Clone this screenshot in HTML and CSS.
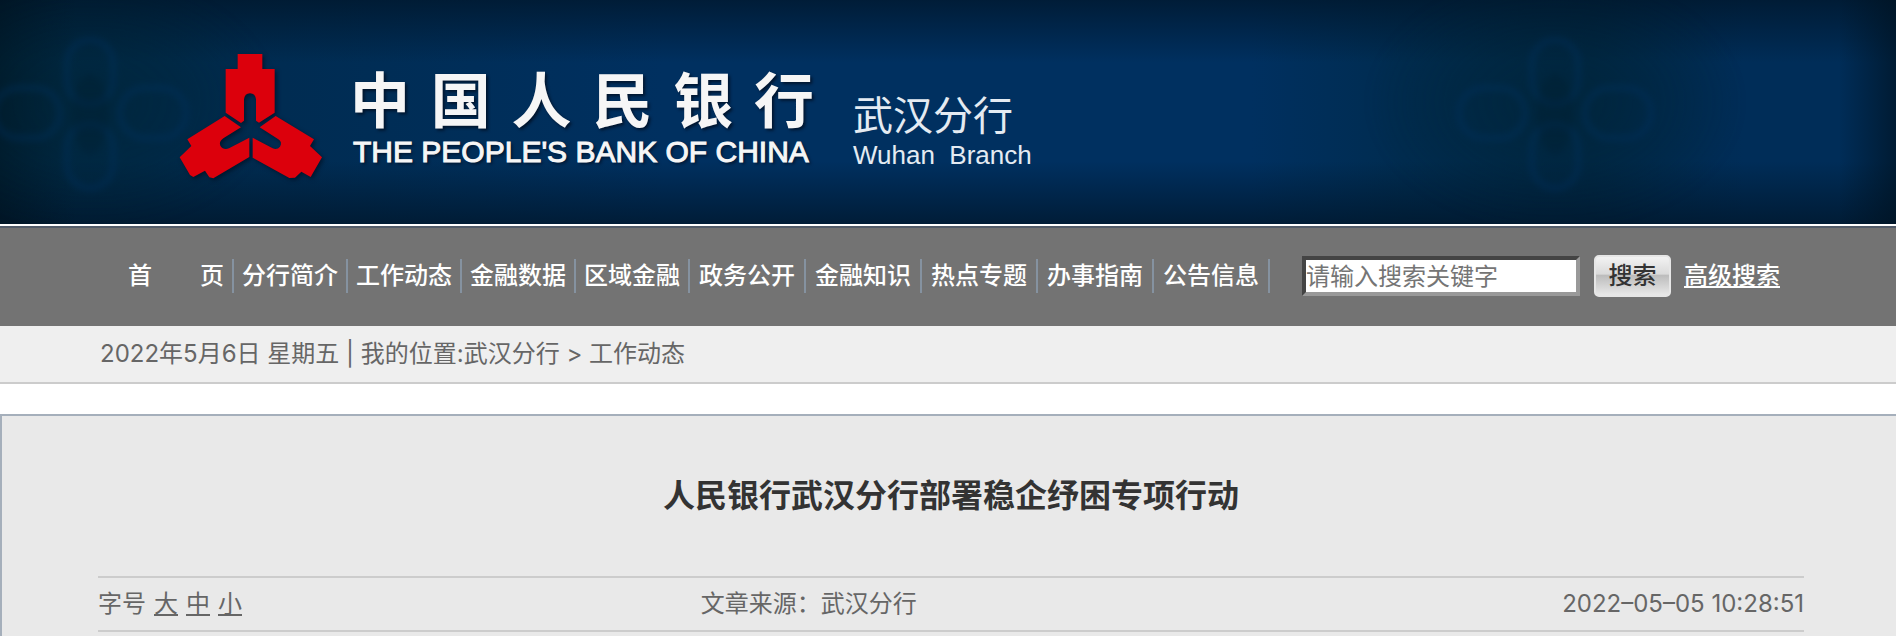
FILE: index.html
```html
<!DOCTYPE html>
<html lang="zh-CN">
<head>
<meta charset="utf-8">
<title>人民银行武汉分行部署稳企纾困专项行动</title>
<link rel="stylesheet" href="styles.css">
</head>
<body>
<header class="banner">
  <svg class="coin coin-left" viewBox="0 0 260 200" aria-hidden="true">
    <defs>
      <radialGradient id="shade">
        <stop offset="0" stop-color="#00222e" stop-opacity=".5"/>
        <stop offset=".5" stop-color="#00222e" stop-opacity=".3"/>
        <stop offset="1" stop-color="#00222e" stop-opacity="0"/>
      </radialGradient>
    </defs>
    <g id="coin-pattern">
      <ellipse cx="130" cy="100" rx="190" ry="130" fill="url(#shade)"/>
      <rect x="107" y="38" width="46" height="64" rx="23" class="coin-ring"/>
      <rect x="107" y="122" width="46" height="64" rx="23" class="coin-ring"/>
      <rect x="34" y="86" width="66" height="50" rx="25" class="coin-ring"/>
      <rect x="160" y="86" width="66" height="50" rx="25" class="coin-ring"/>
      <ellipse cx="130" cy="112" rx="18" ry="40" class="coin-core"/>
    </g>
  </svg>
  <svg class="coin coin-right" viewBox="0 0 260 200" aria-hidden="true"><use href="#coin-pattern"/></svg>
  <div class="brand">
    <svg class="emblem" viewBox="54 36 438 384" role="img" aria-label="中国人民银行行徽">
      <path d="M233 42H307V87H344V218L297 248L288 242V178Q286 160 270 160Q254 160 252 178V242L243 249L197 218V87H233Z"/>
      <path d="M347 228L462 298L450 318L486 352L452 411L424 395L405 413L388 414L278 353V293L338 325Q352 330 360 320Q368 307 355 298L299 262Z"/>
      <path d="M194 228L82 298L94 318L59 352L90 405L100 411L135 392L148 412L160 415L268 351V293L207 325Q190 331 181 317Q176 305 190 295L243 262Z"/>
    </svg>
    <div class="bank">
      <div class="bank-cn"><span>中</span><span>国</span><span>人</span><span>民</span><span>银</span><span>行</span></div>
      <div class="bank-en">THE PEOPLE'S BANK OF CHINA</div>
    </div>
    <div class="branch">
      <div class="branch-cn">武汉分行</div>
      <div class="branch-en">Wuhan  Branch</div>
    </div>
  </div>
</header>

<nav class="nav">
  <ul class="menu">
    <li class="home"><a href="#"><span>首</span><span>页</span></a></li>
    <li><a href="#">分行简介</a></li>
    <li><a href="#">工作动态</a></li>
    <li><a href="#">金融数据</a></li>
    <li><a href="#">区域金融</a></li>
    <li class="wide"><a href="#">政务公开</a></li>
    <li class="wide"><a href="#">金融知识</a></li>
    <li class="wide"><a href="#">热点专题</a></li>
    <li class="wide"><a href="#">办事指南</a></li>
    <li class="wide"><a href="#">公告信息</a></li>
  </ul>
  <form class="search">
    <input type="text" aria-label="搜索关键字" placeholder="请输入搜索关键字">
    <button type="button">搜索</button>
    <a href="#">高级搜索</a>
  </form>
</nav>

<div class="crumbs">2022年5月6日 星期五 | 我的位置:武汉分行 &gt; 工作动态</div>

<main class="article">
  <h1>人民银行武汉分行部署稳企纾困专项行动</h1>
  <div class="meta">
    <div class="sizes"><span>字号</span><a href="#">大</a><a href="#">中</a><a href="#">小</a></div>
    <div class="source">文章来源：武汉分行</div>
    <time class="date">2022–05–05 10:28:51</time>
  </div>
</main>
</body>
</html>
```
FILE: styles.css
```css
* { box-sizing: border-box; }

body {
  margin: 0;
  background: #fff;
  color: #666;
  font: 24px/32px Inter, "Noto Sans CJK SC", sans-serif;
}

.banner {
  position: relative;
  padding: 52px 0 44px 178px;
  overflow: hidden;
  background:
    linear-gradient(to right, rgba(0, 18, 30, .6), transparent 4%, transparent 97%, rgba(0, 18, 32, .65)),
    linear-gradient(to bottom, rgba(0, 22, 42, .75), transparent 28%, transparent 72%, rgba(0, 22, 42, .75)),
    linear-gradient(to right, #002a48 0%, #002c52 15%, #003060 35%, #003060 66%, #002c50 74%, #00294a 84%, #002d58 92%, #002d58 100%);
}

.coin {
  position: absolute;
  top: 2px;
  width: 260px;
  height: 200px;
  overflow: visible;
  filter: blur(3px);
}
.coin-left { left: -40px; }
.coin-right { right: 211px; }
.coin-ring { fill: none; stroke: #003468; stroke-width: 7; opacity: .3; }
.coin-core { fill: #001e30; opacity: .3; }

.brand {
  position: relative;
  display: flex;
  align-items: flex-start;
}

.emblem {
  width: 146px;
  height: 128px;
  fill: #dc000c;
  filter: drop-shadow(2px 2px 2px rgba(0, 10, 25, .6));
}

.bank {
  width: 464px;
  margin-left: 26px;
  padding-top: 16px;
  color: #f6f6f6;
  text-shadow: 2px 2px 3px rgba(0, 10, 25, .7);
}
.bank-cn {
  display: flex;
  justify-content: space-between;
  font-size: 60px;
  line-height: 66px;
  font-weight: 700;
}
.bank-en {
  padding-left: 3px;
  font: 30px/36px "Liberation Sans", Arial, sans-serif;
  -webkit-text-stroke: 1px #f6f6f6;
  white-space: nowrap;
}

.branch {
  margin-left: 39px;
  padding-top: 40px;
  color: #e4ebf2;
}
.branch-cn { font-size: 40px; line-height: 48px; }
.branch-en {
  font: 26px/30px "Liberation Sans", Arial, sans-serif;
  white-space: pre;
}

.nav {
  display: flex;
  align-items: center;
  height: 102px;
  border-top: 2px solid #fff;
  padding-left: 120px;
  background: linear-gradient(#515b69 2px, #737373 2px);
}

.menu {
  display: flex;
  margin: 0;
  padding: 0;
  list-style: none;
}
.menu li {
  padding: 0 8px;
  border-right: 2px solid #8592a0;
  line-height: 34px;
}
.menu .wide { padding: 0 9px; }
.menu a, .search a { color: #fff; font-weight: 500; }
.menu a { text-decoration: none; }
.home a {
  display: flex;
  justify-content: space-between;
  width: 96px;
}

.search {
  display: flex;
  align-items: center;
  margin-left: 32px;
}
.search input {
  width: 278px;
  height: 40px;
  padding: 0;
  border: 4px solid;
  border-color: #444 #999 #999 #444;
  background: #fff;
  font: inherit;
}
.search input::placeholder { color: #757575; opacity: 1; }
.search button {
  width: 77px;
  height: 42px;
  margin: 0 13px 0 14px;
  padding: 0;
  border: 2px solid #e6e6e6;
  border-radius: 5px;
  background: linear-gradient(#f2f2f2, #dadada 45%, #bcbcbc 48%, #e8e8e8);
  color: #333;
  font: inherit;
  font-weight: 500;
}

.crumbs {
  padding: 12px 100px;
  border-bottom: 2px solid #ccc;
  background: #efefef;
}

.article {
  min-height: 222px;
  margin-top: 30px;
  padding: 56px 92px 0 96px;
  border: solid #a5afbb;
  border-width: 2px 0 0 2px;
  background: #e9e9e9;
}
.article h1 {
  margin: 0;
  color: #333;
  font-size: 32px;
  line-height: 48px;
  text-align: center;
}

.meta {
  display: grid;
  grid-template-columns: 3fr 4fr 5fr;
  margin-top: 56px;
  padding: 10px 0;
  border: solid #ccc;
  border-width: 2px 0;
}
.sizes { display: flex; gap: 8px; }
.sizes a { color: #666; }
.source { text-align: center; }
.date { text-align: right; }
```
